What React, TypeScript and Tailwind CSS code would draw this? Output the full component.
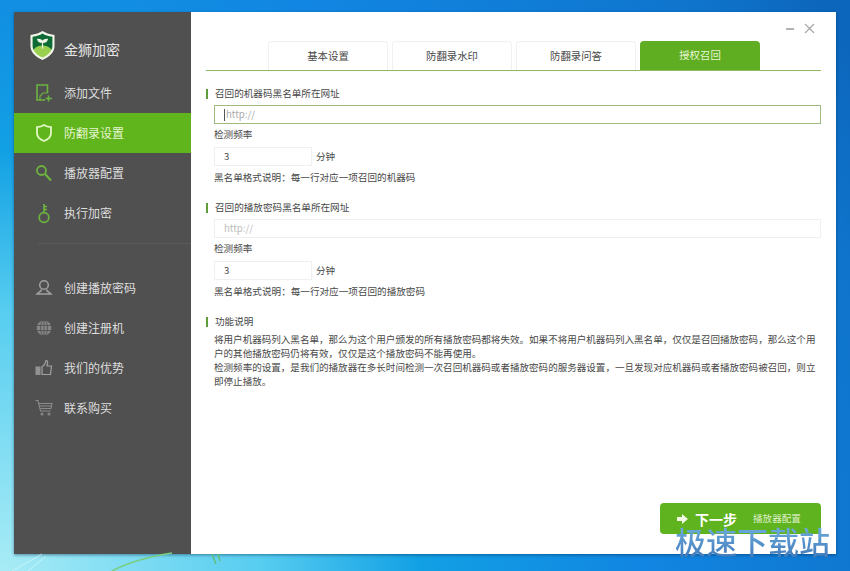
import React from "react";

const G = "#6db33f";
const W = "#a0a0a0";

const Add = () => (
  <svg width="18" height="20" viewBox="0 0 18 20" fill="none" stroke={G} strokeWidth="1.600">
    <path d="M10 17H2V2h10.500v8" />
    <path d="M5 17v-4l3-3h4.500" strokeWidth="1.200" />
    <path d="M13.500 12.500v6M10.500 15.500h6.500" />
  </svg>
);
const Shield = () => (
  <svg width="18" height="20" viewBox="0 0 18 20" fill="none" stroke="#e4f7c8" strokeWidth="1.800">
    <path d="M9 2c2 1.300 4.300 2 7 2.200V10c0 3.800-2.800 6.500-7 8-4.200-1.500-7-4.200-7-8V4.200C4.700 4 7 3.300 9 2z" />
  </svg>
);
const Search = () => (
  <svg width="18" height="20" viewBox="0 0 18 20" fill="none" stroke={G} strokeWidth="1.800">
    <circle cx="6.500" cy="7.500" r="4.500" />
    <path d="M10 11l6 6.500" strokeWidth="2.200" />
  </svg>
);
const Key = () => (
  <svg width="18" height="22" viewBox="0 0 18 22" fill="none" stroke={G} strokeWidth="1.700">
    <circle cx="9" cy="15.500" r="4.800" />
    <path d="M9 11V2M9 4.500h3M9 7.500h3" />
  </svg>
);
const User = () => (
  <svg width="18" height="18" viewBox="0 0 18 18" fill="none" stroke={W} strokeWidth="1.500">
    <circle cx="9" cy="6" r="4.300" />
    <path d="M6.500 10.500C6 13 3.500 13.500 2 15h14c-1.500-1.500-4-2-4.500-4.500" />
  </svg>
);
const Globe = () => (
  <svg width="18" height="18" viewBox="0 0 18 18" fill="#858585" stroke="#505050" strokeWidth="0.800">
    <circle cx="9" cy="9" r="7.800" />
    <ellipse cx="9" cy="9" rx="3.500" ry="7.800" fill="none" />
    <path d="M1.500 6.500h15M1.500 11.500h15M9 1v16" fill="none" />
  </svg>
);
const Thumb = () => (
  <svg width="18" height="18" viewBox="0 0 18 18">
    <rect x="0.500" y="7.500" width="5" height="8.500" fill="#929292" />
    <path d="M7 8l3-3 1-3.500c1.500 0 2 1.500 1.500 3L12 7h4.500l-1 8.500H7z" fill="none" stroke={W} strokeWidth="1.200" />
  </svg>
);
const Cart = () => (
  <svg width="18" height="18" viewBox="0 0 18 18" fill="none" stroke="#8a8a8a" strokeWidth="1.100">
    <path d="M0.500 1.500h2.500l2.500 10.500h10" />
    <path d="M4 4.500h13l-1 5H5.200M4.500 7h12" />
    <circle cx="7" cy="15" r="1" />
    <circle cx="14" cy="15" r="1" />
  </svg>
);

const Logo = () => (
  <svg width="25" height="29" viewBox="0 0 26 30">
    <path d="M13 0c3 2 7 3.500 12.500 4v11.500C25.500 22 20 27 13 30 6 27 .5 22 .5 15.500V4C6 3.500 10 2 13 0z" fill="#f2f6ea" />
    <path d="M13 2.500c2.800 1.700 6 2.900 10.300 3.400v9.500c0 1.500-.3 2.800-.9 4H3.600c-.6-1.200-.9-2.500-.9-4V5.900C7 5.400 10.200 4.200 13 2.500z" fill="#0e6b35" />
    <path d="M3.500 19.500c2.500-3.500 6-4.500 9.500-4.500s7 1 9.500 4.500C20.500 23.500 17 26 13 27.500 9 26 5.500 23.500 3.500 19.500z" fill="#9ad04f" />
    <path d="M13 18v-7M13 11.500c-.5-2-2.500-3-5-3 .3 2.500 2.500 3.500 5 3zM13 11.500c.5-2 2.500-3 5-3-.3 2.500-2.500 3.500-5 3z" fill="#f2f6ea" stroke="#f2f6ea" strokeWidth="1.200" />
  </svg>
);

function NavItem({ icon, label, active }: { icon: React.ReactNode; label: string; active?: boolean }) {
  return (
    <div className={`flex h-10 items-center ${active ? "bg-[#61b51c] text-[#e6f6d2]" : "text-[#dedede]"}`}>
      <div className="flex w-[50px] justify-center pl-[9px]">{icon}</div>
      <span className="text-[12px] leading-none">{label}</span>
    </div>
  );
}

function Label({ children }: { children: React.ReactNode }) {
  return (
    <div className="flex h-[14px] items-center">
      <span className="h-[10px] w-[2px] bg-[#5f9e3a]" />
      <span className="ml-[7px] text-[9.600px] leading-none text-[#484848]">{children}</span>
    </div>
  );
}

function Block({ title, focus, note }: { title: string; focus?: boolean; note: string }) {
  return (
    <div>
      <Label>{title}</Label>
      <div className="pl-[8px]">
        <div
          className={`mt-[4px] flex h-[19px] items-center pl-[9px] text-[9.600px] ${
            focus ? "border border-[#9dbb7c] text-[#aaa]" : "border border-[#f0f0f0] text-[#bbb]"
          }`}
        >
          {focus && <span className="mr-[1px] h-[12px] w-px bg-[#555]" />}
          http://
        </div>
        <div className="mt-[4px] flex h-[14px] items-center text-[9.600px] leading-none text-[#484848]">检测频率</div>
        <div className="mt-[5px] flex items-center">
          <div className="flex h-[19px] w-[98px] items-center border border-[#f0f0f0] pl-[9px] text-[9.600px] text-[#484848]">3</div>
          <span className="ml-[4px] text-[9.600px] leading-none text-[#484848]">分钟</span>
        </div>
        <div className="mt-[5px] flex h-[14px] items-center text-[9.600px] leading-none text-[#484848]">{note}</div>
      </div>
    </div>
  );
}

const tabs = ["基本设置", "防翻录水印", "防翻录问答", "授权召回"];

export default function App() {
  return (
    <div
      className="relative h-[571px] w-[850px] overflow-hidden bg-[radial-gradient(circle_at_0_100%,#a8ecf6_0,#57cdf0_260px,#12a0e4_420px,#1186e2_640px,#0f74cc_900px,#0c66bb_1000px)] pt-[12px] pl-[14px]"
      style={{ fontFamily: '"Noto Sans CJK SC", "Noto Sans", sans-serif' }}
    >
      <svg className="absolute left-0 top-[540px]" width="260" height="31" viewBox="0 0 260 31" fill="none">
        <path d="M112 31c15-8 35-14 60-18" stroke="#78cf80" strokeWidth="1.500" />
        <path d="M212 14l4 10M218 14l2 7" stroke="#5fc07a" strokeWidth="1.500" />
        <path d="M12 31L42 14M28 31L46 16" stroke="#d8f6fb" strokeWidth="1" opacity="0.700" />
      </svg>

      <div className="flex h-[542px] w-[822px] shadow-[0_1px_3px_rgba(0,40,80,0.500)]">
        <aside className="flex w-[177px] shrink-0 flex-col bg-[#505050]">
          <div className="flex h-[61px] items-start pl-[16px] pt-[19px]">
            <Logo />
            <span className="ml-[9px] mt-[11px] text-[14px] leading-none text-[#e4e4e4]">金狮加密</span>
          </div>
          <NavItem icon={<Add />} label="添加文件" />
          <NavItem icon={<Shield />} label="防翻录设置" active />
          <NavItem icon={<Search />} label="播放器配置" />
          <NavItem icon={<Key />} label="执行加密" />
          <div className="ml-[24px] mt-[10px] mb-[24px] h-px bg-[#5b5b5b]" />
          <NavItem icon={<User />} label="创建播放密码" />
          <NavItem icon={<Globe />} label="创建注册机" />
          <NavItem icon={<Thumb />} label="我们的优势" />
          <NavItem icon={<Cart />} label="联系购买" />
        </aside>

        <main className="relative min-w-0 flex-1 bg-white pl-[15px] pr-[15px]">
          <div className="flex h-[29px] items-start justify-end gap-[9px] pt-[11px] pr-[6px]">
            <svg width="10" height="10" viewBox="0 0 10 10" className="mt-[1px]"><path d="M1 5h8" stroke="#9a9a9a" strokeWidth="1.500" /></svg>
            <svg width="11" height="11" viewBox="0 0 11 11"><path d="M1 1l9 9M10 1l-9 9" stroke="#a8a8a8" strokeWidth="1.200" /></svg>
          </div>

          <div className="flex h-[30px] gap-[4px] border-b border-[#8dbb62] pl-[62px]">
            {tabs.map((t, i) => (
              <div
                key={t}
                className={`flex h-[29px] w-[120px] items-center justify-center rounded-t-[4px] text-[10.400px] leading-none ${
                  i === 3 ? "w-[119px] bg-[#5fae22] text-[#e6f6d2]" : "border border-b-0 border-[#f1f1f1] text-[#484848]"
                }`}
              >
                {t}
              </div>
            ))}
          </div>

          <div className="mt-[16px]">
            <Block title="召回的机器码黑名单所在网址" focus note="黑名单格式说明：每一行对应一项召回的机器码" />
          </div>
          <div className="mt-[16px]">
            <Block title="召回的播放密码黑名单所在网址" note="黑名单格式说明：每一行对应一项召回的播放密码" />
          </div>
          <div className="mt-[16px]">
            <Label>功能说明</Label>
            <div className="mt-[3px] pl-[8px] text-[9.560px] leading-[14px] whitespace-nowrap text-[#484848]">
              <div>将用户机器码列入黑名单，那么为这个用户颁发的所有播放密码都将失效。如果不将用户机器码列入黑名单，仅仅是召回播放密码，那么这个用</div>
              <div>户的其他播放密码仍将有效，仅仅是这个播放密码不能再使用。</div>
              <div>检测频率的设置，是我们的播放器在多长时间检测一次召回机器码或者播放密码的服务器设置，一旦发现对应机器码或者播放密码被召回，则立</div>
              <div>即停止播放。</div>
            </div>
          </div>

          <div className="absolute left-[469px] top-[491px] flex h-[31px] w-[161px] items-center rounded-[4px] bg-[#5fb31e] pl-[17px] text-white">
            <svg width="11" height="10" viewBox="0 0 11 10"><path d="M0 3h5V0l6 5-6 5V7H0z" fill="#f2f8e6" /></svg>
            <span className="ml-[7px] text-[14px] font-bold leading-none">下一步</span>
            <span className="ml-[16px] text-[9.600px] leading-none text-[#dff0c8]">播放器配置</span>
          </div>
        </main>
      </div>

      <div className="absolute left-[675px] top-[522px] bg-[linear-gradient(#74b4e4,#3f78b8)] bg-clip-text text-[31px] font-medium leading-[37px] whitespace-nowrap text-transparent">
        极速下载站
      </div>
    </div>
  );
}
